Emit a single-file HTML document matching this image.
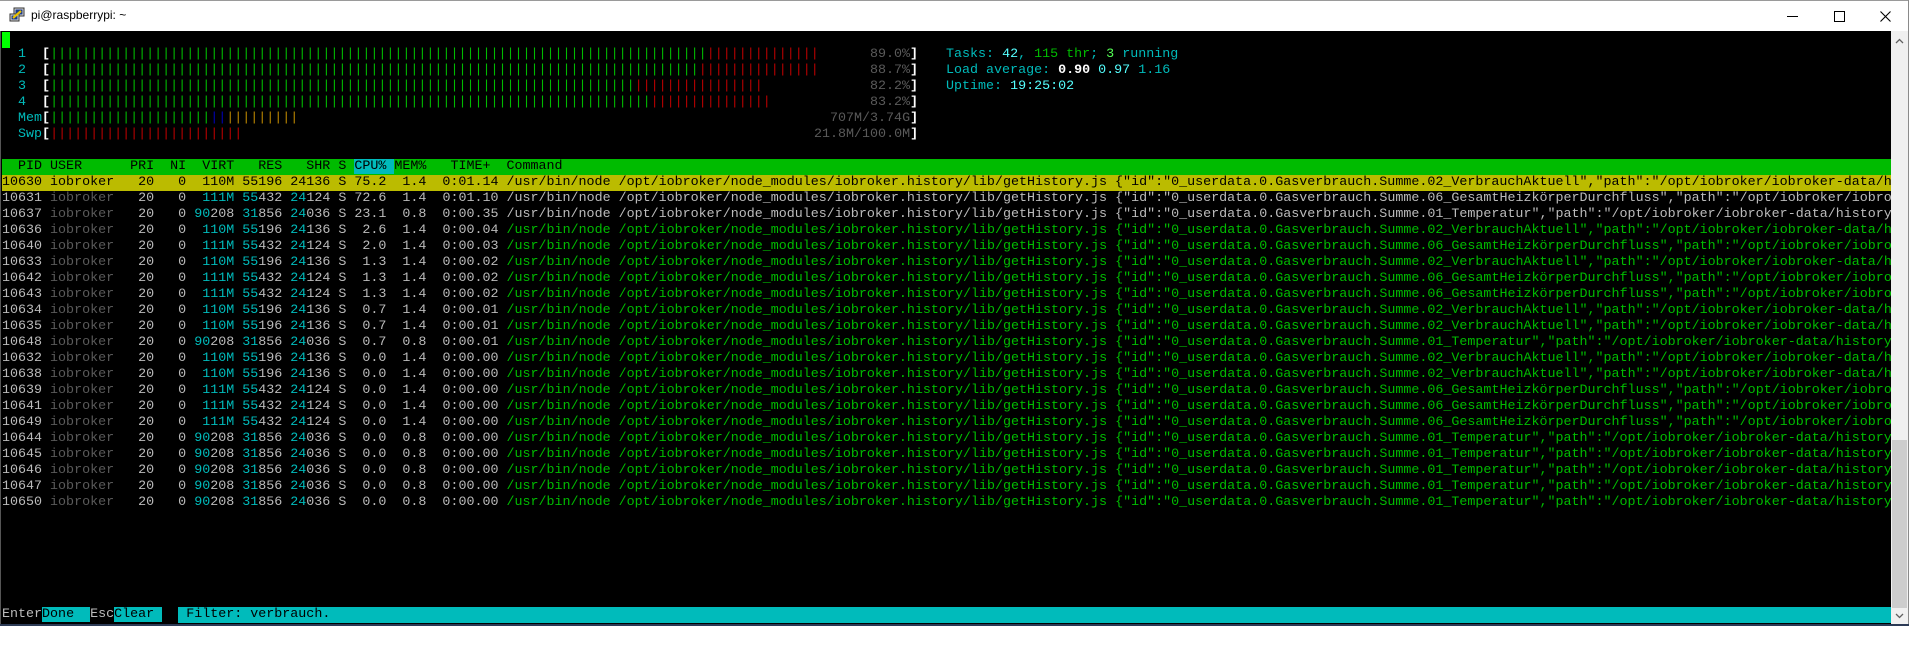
<!DOCTYPE html>
<html><head><meta charset="utf-8">
<style>
*{margin:0;padding:0;box-sizing:border-box}
html,body{width:1909px;height:648px;overflow:hidden;background:#fff}
#title{position:absolute;left:0;top:0;width:1909px;height:31px;background:#fff;border-top:1px solid #9a9a9a;border-right:1px solid #8a8a8a}
#title .t{position:absolute;left:31px;top:7px;font:12px "Liberation Sans",sans-serif;color:#000}
#term{position:absolute;left:0;top:31px;width:1891px;height:593px;background:#000;overflow:hidden;border-left:1px solid #555}
#sb{position:absolute;left:1891px;top:31px;width:17px;height:593px;background:#f0f0f0}
#thumb{position:absolute;left:1px;top:409px;width:15px;height:168px;background:#cdcdcd}
#rb{position:absolute;left:1908px;top:0;width:1px;height:626px;background:#8a8a8a}
#bb{position:absolute;left:0;top:624px;width:1909px;height:2px;background:#2b3a55}
.l{position:absolute;left:1px;height:16px;width:1889px;white-space:pre;font:13.35px/16px "Liberation Mono","DejaVu Sans Mono",monospace;color:#bbb;overflow:hidden}
.a{position:absolute;top:0}
.c{color:#00bbbb}.C{color:#55ffff}.g{color:#00bb00}.G{color:#55ff55}.r{color:#bb0000}.b{color:#0000bb}.o{color:#bb8800}.d{color:#5a5a5a}.w{color:#bbb}.W{color:#fff;font-weight:bold}
.hd{background:#00bb00;color:#000}
.sel{background:#bbbb00;color:#000}
.cb{background:#00bbbb;color:#000}
</style></head><body>
<div id="title">
<svg style="position:absolute;left:9px;top:6px" width="16" height="16" viewBox="0 0 16 16">
<rect x="5" y="1" width="10" height="8" fill="#d8d8d8" stroke="#333" stroke-width="1"/>
<rect x="6.5" y="2.5" width="7" height="5" fill="#1a3a8a"/>
<rect x="1" y="7" width="9" height="7" fill="#d8d8d8" stroke="#333" stroke-width="1"/>
<rect x="2.5" y="8.5" width="6" height="4" fill="#1a3a8a"/>
<path d="M4 11 L12 4" stroke="#e8c000" stroke-width="2.2"/>
</svg>
<div class="t">pi@raspberrypi: ~</div>
<div style="position:absolute;left:1787px;top:15px;width:11px;height:1px;background:#000"></div>
<div style="position:absolute;left:1834px;top:10px;width:11px;height:11px;border:1px solid #000"></div>
<svg style="position:absolute;left:1880px;top:10px" width="11" height="11" viewBox="0 0 11 11"><path d="M0.5 0.5 L10.5 10.5 M10.5 0.5 L0.5 10.5" stroke="#000" stroke-width="1.1"/></svg>
</div>
<div id="term">
<div style="position:absolute;left:1px;top:1px;width:8px;height:16px;background:#00ff00"></div>

<div class="l" style="top:16px"><span class="c">  1  </span><span class="W">[</span><span class="g">||||||||||||||||||||||||||||||||||||||||||||||||||||||||||||||||||||||||||||||||||</span><span class="r">||||||||||||||</span><span class="a" style="left:868px"><span class="d">89.0%</span><span class="W">]</span></span><span class="a" style="left:944px"><span class="c">Tasks: </span><span class="C">42</span><span class="c">, </span><span class="g">115 thr</span><span class="c">; </span><span class="G">3</span><span class="c"> running</span></span></div>
<div class="l" style="top:32px"><span class="c">  2  </span><span class="W">[</span><span class="g">|||||||||||||||||||||||||||||||||||||||||||||||||||||||||||||||||||||||||||||||||</span><span class="r">|||||||||||||||</span><span class="a" style="left:868px"><span class="d">88.7%</span><span class="W">]</span></span><span class="a" style="left:944px"><span class="c">Load average: </span><span class="W">0.90 </span><span class="C">0.97 </span><span class="c">1.16</span></span></div>
<div class="l" style="top:48px"><span class="c">  3  </span><span class="W">[</span><span class="g">|||||||||||||||||||||||||||||||||||||||||||||||||||||||||||||||||||||||||</span><span class="r">||||||||||||||||</span><span class="a" style="left:868px"><span class="d">82.2%</span><span class="W">]</span></span><span class="a" style="left:944px"><span class="c">Uptime: </span><span class="C">19:25:02</span></span></div>
<div class="l" style="top:64px"><span class="c">  4  </span><span class="W">[</span><span class="g">|||||||||||||||||||||||||||||||||||||||||||||||||||||||||||||||||||||||||||</span><span class="r">|||||||||||||||</span><span class="a" style="left:868px"><span class="d">83.2%</span><span class="W">]</span></span></div>
<div class="l" style="top:80px"><span class="c">  Mem</span><span class="W">[</span><span class="g">||||||||||||||||||||</span><span class="b">||</span><span class="o">|||||||||</span><span class="a" style="left:828px"><span class="d">707M/3.74G</span><span class="W">]</span></span></div>
<div class="l" style="top:96px"><span class="c">  Swp</span><span class="W">[</span><span class="r">||||||||||||||||||||||||</span><span class="a" style="left:812px"><span class="d">21.8M/100.0M</span><span class="W">]</span></span></div>

<div class="l hd" style="top:128px">  PID USER      PRI  NI  VIRT   RES   SHR S <span class="cb">CPU% </span>MEM%   TIME+  Command</div>
<div class="l sel" style="top:144px">10630 iobroker   20   0  110M 55196 24136 S 75.2  1.4  0:01.14 /usr/bin/node /opt/iobroker/node_modules/iobroker.history/lib/getHistory.js {"id":"0_userdata.0.Gasverbrauch.Summe.02_VerbrauchAktuell","path":"/opt/iobroker/iobroker-data/history/","start":1610</div>
<div class="l" style="top:160px">10631 <span class="d">iobroker</span>   20   0  <span class="c">111M</span> <span class="c">55</span>432 <span class="c">24</span>124 S 72.6  1.4  0:01.10 /usr/bin/node /opt/iobroker/node_modules/iobroker.history/lib/getHistory.js {"id":"0_userdata.0.Gasverbrauch.Summe.06_GesamtHeizkörperDurchfluss","path":"/opt/iobroker/iobroker-data/history/"</div>
<div class="l" style="top:176px">10637 <span class="d">iobroker</span>   20   0 <span class="c">90</span>208 <span class="c">31</span>856 <span class="c">24</span>036 S 23.1  0.8  0:00.35 /usr/bin/node /opt/iobroker/node_modules/iobroker.history/lib/getHistory.js {"id":"0_userdata.0.Gasverbrauch.Summe.01_Temperatur","path":"/opt/iobroker/iobroker-data/history/","start":1610</div>
<div class="l" style="top:192px">10636 <span class="d">iobroker</span>   20   0  <span class="c">110M</span> <span class="c">55</span>196 <span class="c">24</span>136 S  2.6  1.4  0:00.04 <span class="g">/usr/bin/node /opt/iobroker/node_modules/iobroker.history/lib/getHistory.js {"id":"0_userdata.0.Gasverbrauch.Summe.02_VerbrauchAktuell","path":"/opt/iobroker/iobroker-data/history/"</span></div>
<div class="l" style="top:208px">10640 <span class="d">iobroker</span>   20   0  <span class="c">111M</span> <span class="c">55</span>432 <span class="c">24</span>124 S  2.0  1.4  0:00.03 <span class="g">/usr/bin/node /opt/iobroker/node_modules/iobroker.history/lib/getHistory.js {"id":"0_userdata.0.Gasverbrauch.Summe.06_GesamtHeizkörperDurchfluss","path":"/opt/iobroker/iobroker-data/"</span></div>
<div class="l" style="top:224px">10633 <span class="d">iobroker</span>   20   0  <span class="c">110M</span> <span class="c">55</span>196 <span class="c">24</span>136 S  1.3  1.4  0:00.02 <span class="g">/usr/bin/node /opt/iobroker/node_modules/iobroker.history/lib/getHistory.js {"id":"0_userdata.0.Gasverbrauch.Summe.02_VerbrauchAktuell","path":"/opt/iobroker/iobroker-data/history/"</span></div>
<div class="l" style="top:240px">10642 <span class="d">iobroker</span>   20   0  <span class="c">111M</span> <span class="c">55</span>432 <span class="c">24</span>124 S  1.3  1.4  0:00.02 <span class="g">/usr/bin/node /opt/iobroker/node_modules/iobroker.history/lib/getHistory.js {"id":"0_userdata.0.Gasverbrauch.Summe.06_GesamtHeizkörperDurchfluss","path":"/opt/iobroker/iobroker-data/"</span></div>
<div class="l" style="top:256px">10643 <span class="d">iobroker</span>   20   0  <span class="c">111M</span> <span class="c">55</span>432 <span class="c">24</span>124 S  1.3  1.4  0:00.02 <span class="g">/usr/bin/node /opt/iobroker/node_modules/iobroker.history/lib/getHistory.js {"id":"0_userdata.0.Gasverbrauch.Summe.06_GesamtHeizkörperDurchfluss","path":"/opt/iobroker/iobroker-data/"</span></div>
<div class="l" style="top:272px">10634 <span class="d">iobroker</span>   20   0  <span class="c">110M</span> <span class="c">55</span>196 <span class="c">24</span>136 S  0.7  1.4  0:00.01 <span class="g">/usr/bin/node /opt/iobroker/node_modules/iobroker.history/lib/getHistory.js {"id":"0_userdata.0.Gasverbrauch.Summe.02_VerbrauchAktuell","path":"/opt/iobroker/iobroker-data/history/"</span></div>
<div class="l" style="top:288px">10635 <span class="d">iobroker</span>   20   0  <span class="c">110M</span> <span class="c">55</span>196 <span class="c">24</span>136 S  0.7  1.4  0:00.01 <span class="g">/usr/bin/node /opt/iobroker/node_modules/iobroker.history/lib/getHistory.js {"id":"0_userdata.0.Gasverbrauch.Summe.02_VerbrauchAktuell","path":"/opt/iobroker/iobroker-data/history/"</span></div>
<div class="l" style="top:304px">10648 <span class="d">iobroker</span>   20   0 <span class="c">90</span>208 <span class="c">31</span>856 <span class="c">24</span>036 S  0.7  0.8  0:00.01 <span class="g">/usr/bin/node /opt/iobroker/node_modules/iobroker.history/lib/getHistory.js {"id":"0_userdata.0.Gasverbrauch.Summe.01_Temperatur","path":"/opt/iobroker/iobroker-data/history/","start"</span></div>
<div class="l" style="top:320px">10632 <span class="d">iobroker</span>   20   0  <span class="c">110M</span> <span class="c">55</span>196 <span class="c">24</span>136 S  0.0  1.4  0:00.00 <span class="g">/usr/bin/node /opt/iobroker/node_modules/iobroker.history/lib/getHistory.js {"id":"0_userdata.0.Gasverbrauch.Summe.02_VerbrauchAktuell","path":"/opt/iobroker/iobroker-data/history/"</span></div>
<div class="l" style="top:336px">10638 <span class="d">iobroker</span>   20   0  <span class="c">110M</span> <span class="c">55</span>196 <span class="c">24</span>136 S  0.0  1.4  0:00.00 <span class="g">/usr/bin/node /opt/iobroker/node_modules/iobroker.history/lib/getHistory.js {"id":"0_userdata.0.Gasverbrauch.Summe.02_VerbrauchAktuell","path":"/opt/iobroker/iobroker-data/history/"</span></div>
<div class="l" style="top:352px">10639 <span class="d">iobroker</span>   20   0  <span class="c">111M</span> <span class="c">55</span>432 <span class="c">24</span>124 S  0.0  1.4  0:00.00 <span class="g">/usr/bin/node /opt/iobroker/node_modules/iobroker.history/lib/getHistory.js {"id":"0_userdata.0.Gasverbrauch.Summe.06_GesamtHeizkörperDurchfluss","path":"/opt/iobroker/iobroker-data/"</span></div>
<div class="l" style="top:368px">10641 <span class="d">iobroker</span>   20   0  <span class="c">111M</span> <span class="c">55</span>432 <span class="c">24</span>124 S  0.0  1.4  0:00.00 <span class="g">/usr/bin/node /opt/iobroker/node_modules/iobroker.history/lib/getHistory.js {"id":"0_userdata.0.Gasverbrauch.Summe.06_GesamtHeizkörperDurchfluss","path":"/opt/iobroker/iobroker-data/"</span></div>
<div class="l" style="top:384px">10649 <span class="d">iobroker</span>   20   0  <span class="c">111M</span> <span class="c">55</span>432 <span class="c">24</span>124 S  0.0  1.4  0:00.00 <span class="g">/usr/bin/node /opt/iobroker/node_modules/iobroker.history/lib/getHistory.js {"id":"0_userdata.0.Gasverbrauch.Summe.06_GesamtHeizkörperDurchfluss","path":"/opt/iobroker/iobroker-data/"</span></div>
<div class="l" style="top:400px">10644 <span class="d">iobroker</span>   20   0 <span class="c">90</span>208 <span class="c">31</span>856 <span class="c">24</span>036 S  0.0  0.8  0:00.00 <span class="g">/usr/bin/node /opt/iobroker/node_modules/iobroker.history/lib/getHistory.js {"id":"0_userdata.0.Gasverbrauch.Summe.01_Temperatur","path":"/opt/iobroker/iobroker-data/history/","start"</span></div>
<div class="l" style="top:416px">10645 <span class="d">iobroker</span>   20   0 <span class="c">90</span>208 <span class="c">31</span>856 <span class="c">24</span>036 S  0.0  0.8  0:00.00 <span class="g">/usr/bin/node /opt/iobroker/node_modules/iobroker.history/lib/getHistory.js {"id":"0_userdata.0.Gasverbrauch.Summe.01_Temperatur","path":"/opt/iobroker/iobroker-data/history/","start"</span></div>
<div class="l" style="top:432px">10646 <span class="d">iobroker</span>   20   0 <span class="c">90</span>208 <span class="c">31</span>856 <span class="c">24</span>036 S  0.0  0.8  0:00.00 <span class="g">/usr/bin/node /opt/iobroker/node_modules/iobroker.history/lib/getHistory.js {"id":"0_userdata.0.Gasverbrauch.Summe.01_Temperatur","path":"/opt/iobroker/iobroker-data/history/","start"</span></div>
<div class="l" style="top:448px">10647 <span class="d">iobroker</span>   20   0 <span class="c">90</span>208 <span class="c">31</span>856 <span class="c">24</span>036 S  0.0  0.8  0:00.00 <span class="g">/usr/bin/node /opt/iobroker/node_modules/iobroker.history/lib/getHistory.js {"id":"0_userdata.0.Gasverbrauch.Summe.01_Temperatur","path":"/opt/iobroker/iobroker-data/history/","start"</span></div>
<div class="l" style="top:464px">10650 <span class="d">iobroker</span>   20   0 <span class="c">90</span>208 <span class="c">31</span>856 <span class="c">24</span>036 S  0.0  0.8  0:00.00 <span class="g">/usr/bin/node /opt/iobroker/node_modules/iobroker.history/lib/getHistory.js {"id":"0_userdata.0.Gasverbrauch.Summe.01_Temperatur","path":"/opt/iobroker/iobroker-data/history/","start"</span></div>

<div class="l" style="top:576px">Enter<span class="cb">Done  </span>Esc<span class="cb">Clear </span>  <span class="cb" style="display:inline-block;width:1720px"> Filter: verbrauch.</span></div>
</div>
<div id="sb">
<svg style="position:absolute;left:4px;top:7px" width="9" height="6" viewBox="0 0 9 6"><path d="M1 5 L4.5 1.5 L8 5" stroke="#606060" stroke-width="1.3" fill="none"/></svg>
<div id="thumb"></div>
<svg style="position:absolute;left:4px;top:582px" width="9" height="6" viewBox="0 0 9 6"><path d="M1 1 L4.5 4.5 L8 1" stroke="#606060" stroke-width="1.3" fill="none"/></svg>
</div>
<div id="rb"></div>
<div id="bb"></div>
</body></html>
